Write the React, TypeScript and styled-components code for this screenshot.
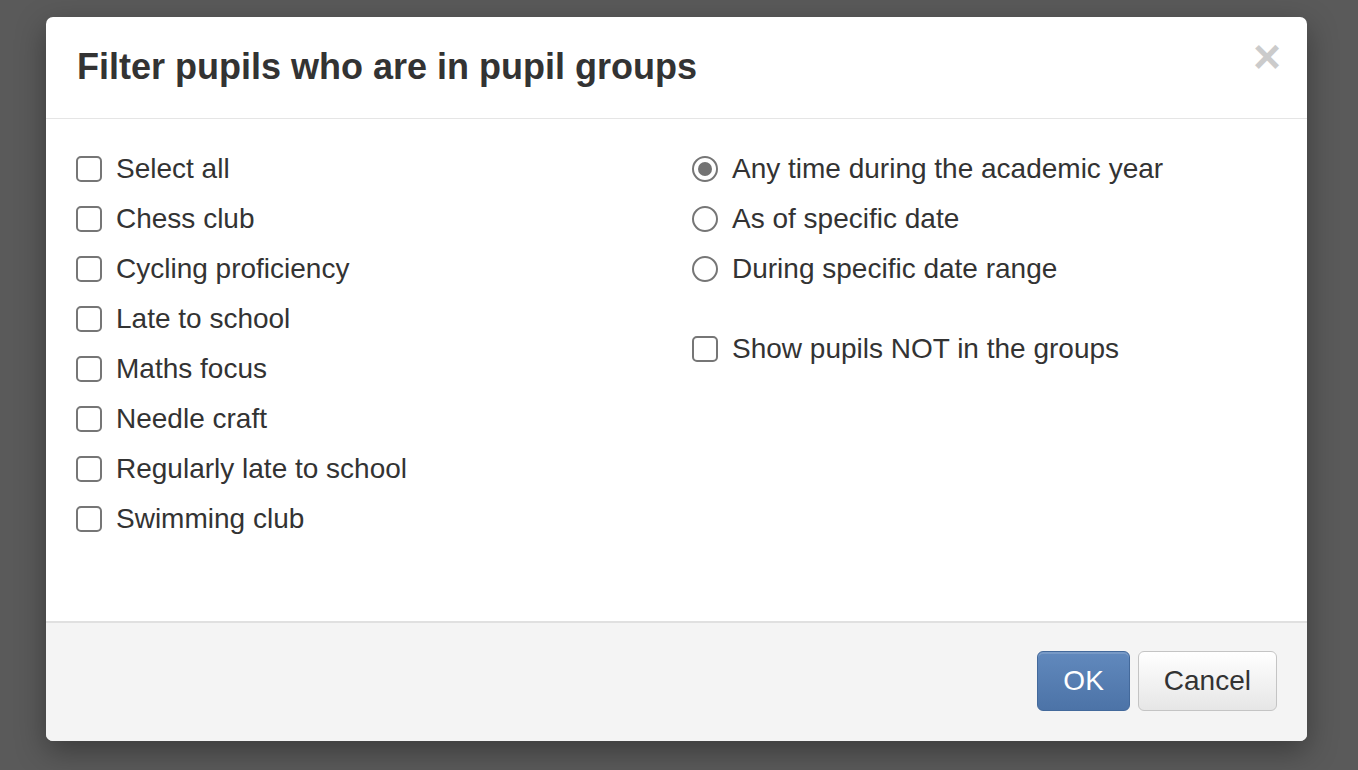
import React from "react";
import styled, { createGlobalStyle } from "styled-components";

const Global = createGlobalStyle`
  html, body {
    margin: 0;
    padding: 0;
    background: #5a5a5a;
    font-family: "Liberation Sans", Arial, sans-serif;
    color: #333333;
  }
  * { box-sizing: border-box; }
`;

const Backdrop = styled.div`
  width: 1358px;
  height: 770px;
  background: #5a5a5a;
  padding: 17px 51px 0 46px;
`;

const Dialog = styled.div`
  width: 1261px;
  background: #ffffff;
  border-radius: 7px;
  box-shadow: 0 10px 30px rgba(0, 0, 0, 0.35);
  overflow: hidden;
  display: flex;
  flex-direction: column;
`;

const Header = styled.div`
  display: flex;
  justify-content: space-between;
  align-items: flex-start;
  padding: 30px 26px 31px 31px;
  border-bottom: 1px solid #e5e5e5;
`;

const Title = styled.h4`
  margin: 0;
  font-size: 36px;
  line-height: 40px;
  font-weight: bold;
  color: #333333;
`;

const Close = styled.button`
  border: 0;
  background: transparent;
  padding: 0;
  margin-top: -14px;
  font-family: "Liberation Sans", Arial, sans-serif;
  font-size: 48px;
  line-height: 48px;
  font-weight: bold;
  color: #000;
  opacity: 0.2;
  cursor: pointer;
`;

const Body = styled.div`
  height: 502px;
  padding: 30px 30px 30px 30px;
  display: grid;
  grid-template-columns: 586px 1fr;
  column-gap: 30px;
  align-items: start;
`;

const Column = styled.div`
  display: flex;
  flex-direction: column;
  gap: 10px;
`;

const Spacer = styled.div`
  height: 20px;
`;

const Option = styled.label`
  display: flex;
  align-items: center;
  gap: 14px;
  height: 40px;
  font-size: 28px;
  line-height: 40px;
  color: #333333;
  cursor: pointer;
`;

const Box = styled.span`
  width: 26px;
  height: 26px;
  flex: none;
  border: 2px solid #767676;
  border-radius: 5px;
  background: #fff;
`;

const Radio = styled.span<{ $checked?: boolean }>`
  width: 26px;
  height: 26px;
  flex: none;
  border: 2px solid #767676;
  border-radius: 50%;
  background: #fff;
  display: flex;
  align-items: center;
  justify-content: center;
  &::after {
    content: "";
    width: 14px;
    height: 14px;
    border-radius: 50%;
    background: ${(p) => (p.$checked ? "#737373" : "transparent")};
  }
`;

const Footer = styled.div`
  display: flex;
  justify-content: flex-end;
  gap: 8px;
  padding: 28px 30px 30px 30px;
  background: #f4f4f4;
  border-top: 2px solid #e0e0e0;
`;

const Button = styled.button<{ $primary?: boolean }>`
  height: 60px;
  padding: 0 25px;
  font-family: "Liberation Sans", Arial, sans-serif;
  font-size: 28px;
  line-height: 40px;
  border-radius: 6px;
  cursor: pointer;
  color: ${(p) => (p.$primary ? "#ffffff" : "#333333")};
  border: 1px solid ${(p) => (p.$primary ? "#43699b" : "#c4c4c4")};
  background: ${(p) =>
    p.$primary
      ? "linear-gradient(to bottom, #6189bd 0%, #4c73a7 100%)"
      : "linear-gradient(to bottom, #ffffff 0%, #e6e6e6 100%)"};
  box-shadow: inset 0 2px 0 rgba(255, 255, 255, 0.15);
`;

const groups = [
  "Select all",
  "Chess club",
  "Cycling proficiency",
  "Late to school",
  "Maths focus",
  "Needle craft",
  "Regularly late to school",
  "Swimming club",
];

export default function App() {
  return (
    <>
      <Global />
      <Backdrop>
        <Dialog>
          <Header>
            <Title>Filter pupils who are in pupil groups</Title>
            <Close aria-label="Close">×</Close>
          </Header>
          <Body>
            <Column>
              {groups.map((g) => (
                <Option key={g}>
                  <Box />
                  {g}
                </Option>
              ))}
            </Column>
            <Column>
              <Option>
                <Radio $checked />
                Any time during the academic year
              </Option>
              <Option>
                <Radio />
                As of specific date
              </Option>
              <Option>
                <Radio />
                During specific date range
              </Option>
              <Spacer />
              <Option>
                <Box />
                Show pupils NOT in the groups
              </Option>
            </Column>
          </Body>
          <Footer>
            <Button $primary>OK</Button>
            <Button>Cancel</Button>
          </Footer>
        </Dialog>
      </Backdrop>
    </>
  );
}
